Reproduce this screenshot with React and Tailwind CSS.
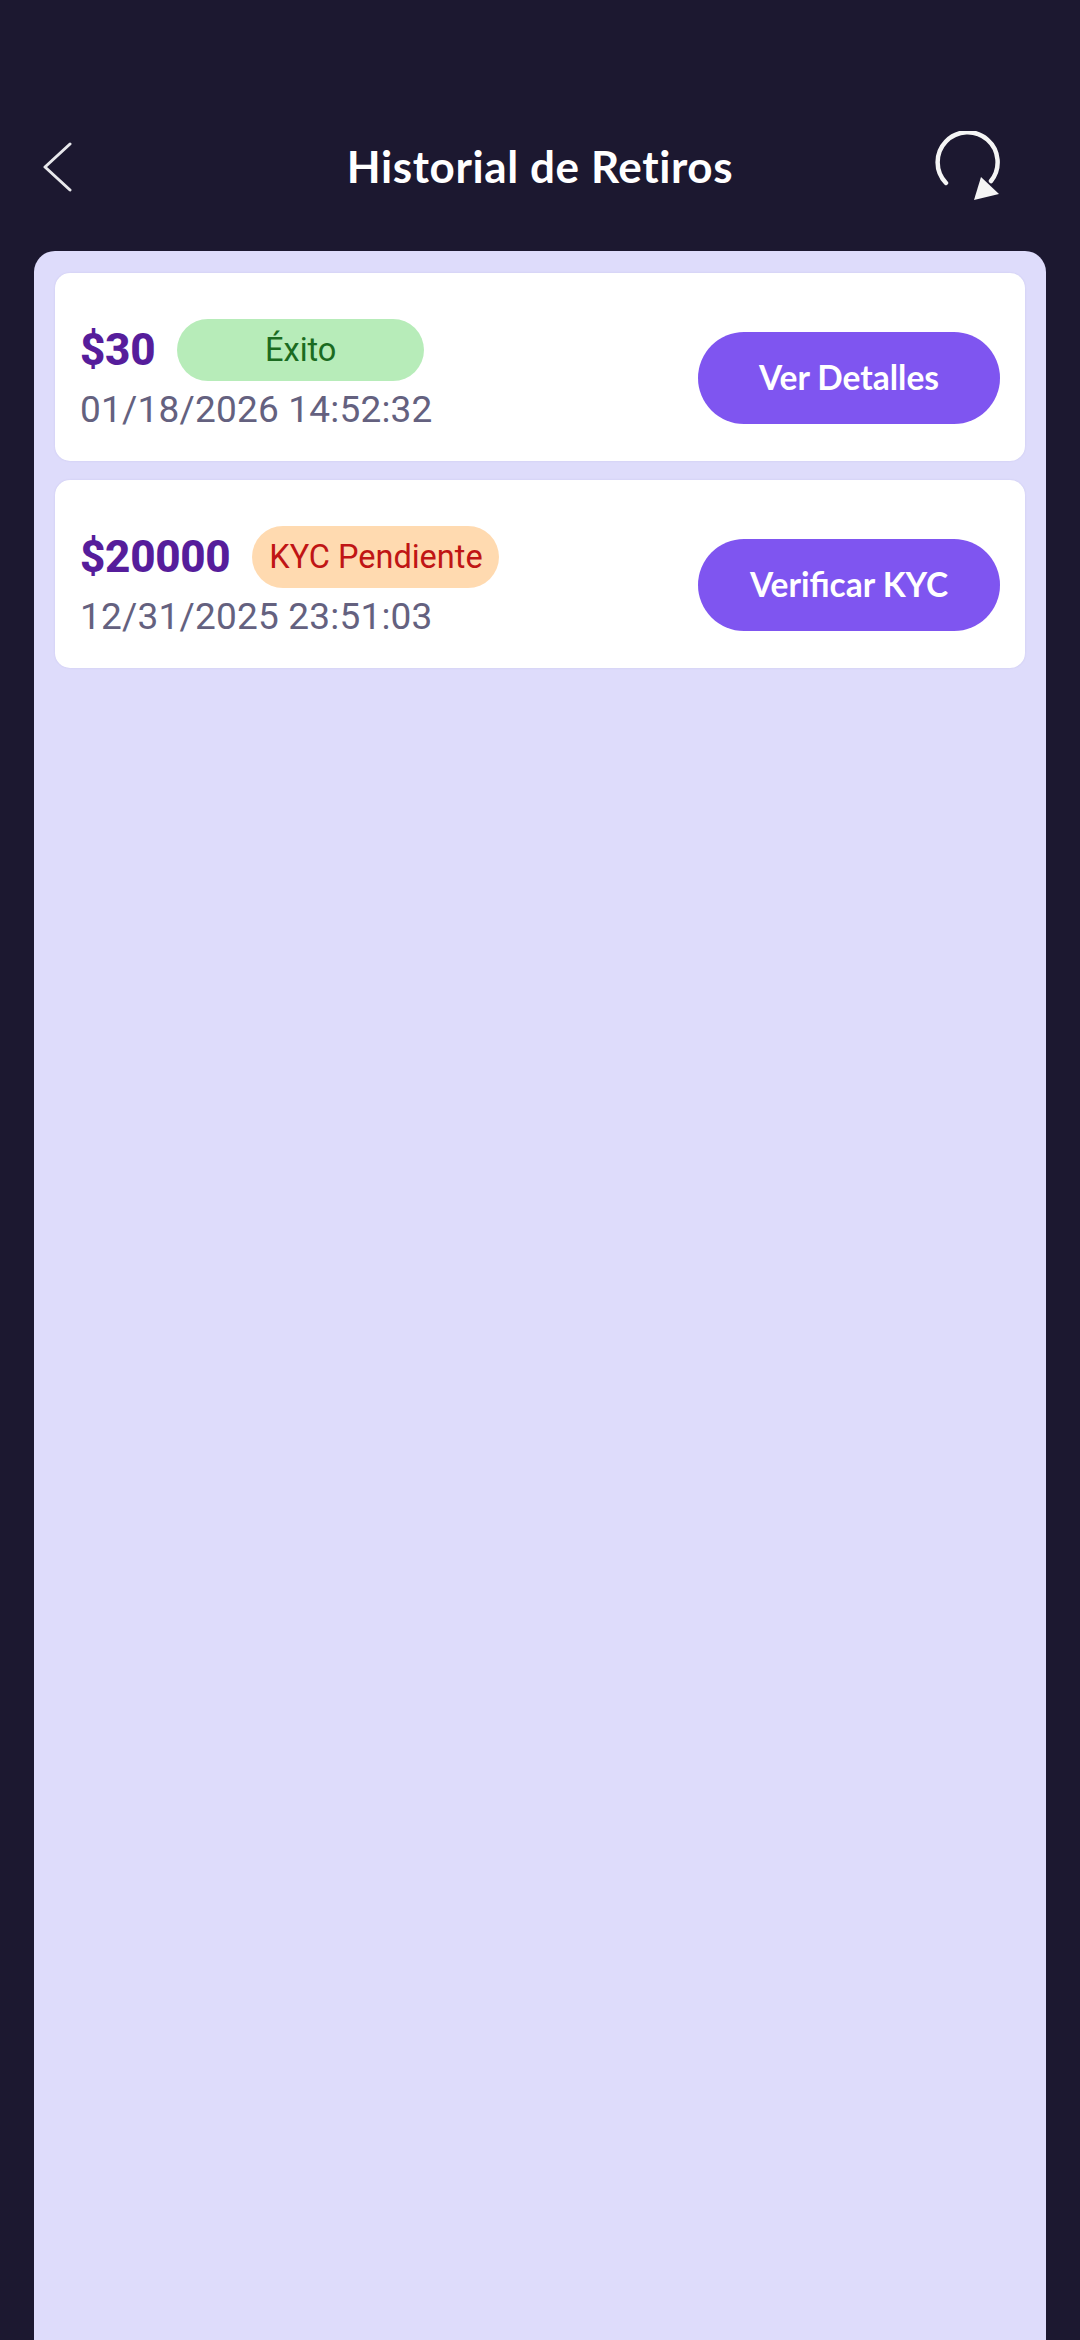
function Row({ amount, badge, badgeClass, date, action }) {
  return (
    <div className="flex h-[188px] items-center justify-between rounded-[15px] bg-white px-[25px] pt-[22px] shadow-[0_0_2px_rgba(90,80,160,0.15)]">
      <div className="flex flex-col pb-[3px] font-['Roboto',sans-serif]">
        <div className="flex h-[62px] items-center">
          <span className="text-[44px] leading-none font-extrabold tracking-[-0.3px] text-[#561d9b]">{amount}</span>
          <span className={`ml-[22px] flex h-[62px] w-[247px] items-center justify-center rounded-full text-[32.5px] leading-none ${badgeClass}`}>{badge}</span>
        </div>
        <div className="mt-[5px] text-[37px] leading-[48px] tracking-[0.2px] text-[#64617f]">{date}</div>
      </div>
      <button className="flex h-[92px] w-[302px] items-center justify-center rounded-full bg-[#7f55f0] font-['Lato',sans-serif] text-[33.5px] leading-none font-bold text-white">{action}</button>
    </div>
  );
}

export default function App() {
  return (
    <div className="flex h-[2340px] flex-col overflow-hidden bg-[#1c1830]">
      <header className="mt-[124px] grid h-[86px] shrink-0 grid-cols-[1fr_auto_1fr] items-center">
        <div className="pl-[42px]">
          <svg width="30" height="50" viewBox="0 0 30 50" fill="none" stroke="#e8e8ec" strokeWidth="3" strokeLinecap="round" strokeLinejoin="round">
            <path d="M28 2 L3 25 L28 48" />
          </svg>
        </div>
        <h1 className="pb-[2px] font-['Lato',sans-serif] text-[44px] leading-none font-bold tracking-[0.6px] text-white">Historial de Retiros</h1>
        <div className="flex justify-end pr-[78px]">
          <svg className="blur-[0.6px]" width="68" height="72" viewBox="0 0 68 72" fill="none">
            <path d="M12 52 A30 30 0 1 1 57 50" stroke="#f5f5f5" strokeWidth="4.5" strokeLinecap="round" />
            <path d="M40 69 L65 63 L47 46 Z" fill="#f5f5f5" />
          </svg>
        </div>
      </header>
      <main className="mx-[34px] mt-[41px] flex flex-1 flex-col gap-[19px] rounded-t-[21px] bg-[#dedcfb] px-[21px] pt-[22px]">
        <Row amount="$30" badge="Éxito" badgeClass="bg-[#b7ecb9] text-[#1b6b21]" date="01/18/2026 14:52:32" action="Ver Detalles" />
        <Row amount="$20000" badge="KYC Pendiente" badgeClass="bg-[#ffdab0] text-[#c01515]" date="12/31/2025 23:51:03" action="Verificar KYC" />
      </main>
    </div>
  );
}
